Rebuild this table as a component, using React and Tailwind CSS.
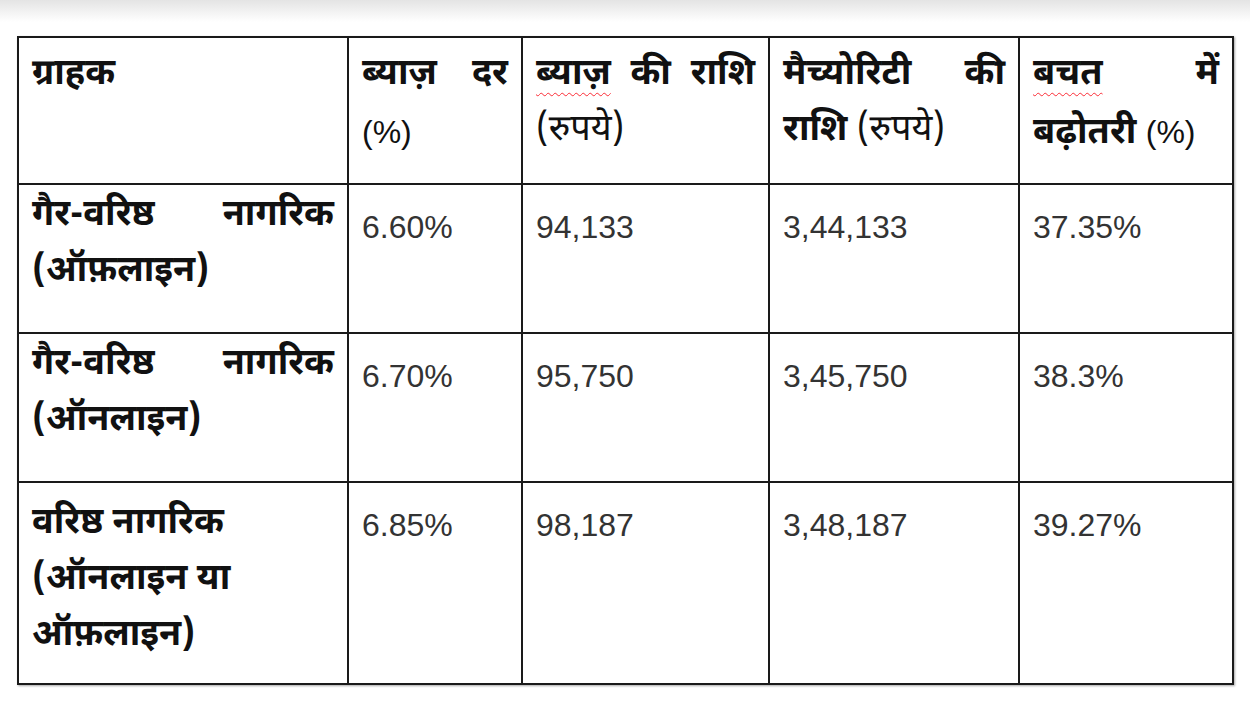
import React from "react";

const hindi = { fontFamily: '"Noto Sans Devanagari", "Lohit Devanagari", "Noto Sans", sans-serif' };
const latin = { fontFamily: '"Liberation Sans", Arial, sans-serif' };

const rows = [
  {
    name: [["गैर-वरिष्ठ", "नागरिक"], ["(ऑफ़लाइन)"]],
    rate: "6.60%",
    interest: "94,133",
    maturity: "3,44,133",
    growth: "37.35%",
    h: "h-[149px]",
    pad: "pt-[4px]",
  },
  {
    name: [["गैर-वरिष्ठ", "नागरिक"], ["(ऑनलाइन)"]],
    rate: "6.70%",
    interest: "95,750",
    maturity: "3,45,750",
    growth: "38.3%",
    h: "h-[149px]",
    pad: "pt-[4px]",
  },
  {
    name: [["वरिष्ठ नागरिक"], ["(ऑनलाइन या"], ["ऑफ़लाइन)"]],
    rate: "6.85%",
    interest: "98,187",
    maturity: "3,48,187",
    growth: "39.27%",
    h: "h-[202px]",
    pad: "pt-[14px]",
  },
];

const Line = ({ words }) => (
  <div className="flex justify-between leading-[56px]">
    {words.map((w, i) => (
      <span key={i}>{w}</span>
    ))}
  </div>
);

const Squiggle = ({ children }) => (
  <span className="underline decoration-wavy decoration-red-500 decoration-1 underline-offset-[8px]">
    {children}
  </span>
);

const Num = ({ children }) => (
  <td className="align-top border-2 border-[#1a1a1a] pl-[13px] pt-[24px]">
    <div className="text-[32px] font-normal text-[#333] leading-[36px]" style={latin}>
      {children}
    </div>
  </td>
);

export default function App() {
  const border = "align-top border-2 border-[#1a1a1a] px-[13px]";
  const head = `${border} pt-[10px]`;

  return (
    <div className="w-[1250px] h-[720px] bg-white overflow-hidden">
      <div className="h-[22px] bg-gradient-to-b from-[#e4e4e4] to-white" />
      <div className="pl-[17px] pt-[14px]">
        <table
          className="border-collapse table-fixed w-[1215px] text-[36px] font-bold text-[#111] shadow-[1px_1px_2px_rgba(0,0,0,0.35)]"
          style={hindi}
        >
          <colgroup>
            <col className="w-[330px]" />
            <col className="w-[174px]" />
            <col className="w-[247px]" />
            <col className="w-[250px]" />
            <col className="w-[214px]" />
          </colgroup>
          <tbody>
            <tr className="h-[147px]">
              <td className={head}>
                <Line words={["ग्राहक"]} />
              </td>
              <td className={head}>
                <Line words={["ब्याज़", "दर"]} />
                <div className="leading-[56px] font-normal text-[32px]" style={latin}>
                  (%)
                </div>
              </td>
              <td className={head}>
                <div className="flex justify-between leading-[56px]">
                  <Squiggle>ब्याज़</Squiggle>
                  <span>की</span>
                  <span>राशि</span>
                </div>
                <div className="leading-[56px] font-normal">(रुपये)</div>
              </td>
              <td className={head}>
                <Line words={["मैच्योरिटी", "की"]} />
                <div className="leading-[56px]">
                  राशि <span className="font-normal">(रुपये)</span>
                </div>
              </td>
              <td className={head}>
                <div className="flex justify-between leading-[56px]">
                  <Squiggle>बचत</Squiggle>
                  <span>में</span>
                </div>
                <div className="leading-[56px]">
                  बढ़ोतरी{" "}
                  <span className="font-normal text-[32px]" style={latin}>
                    (%)
                  </span>
                </div>
              </td>
            </tr>
            {rows.map((r, i) => (
              <tr key={i} className={r.h}>
                <td className={`${border} ${r.pad}`}>
                  {r.name.map((words, j) => (
                    <Line key={j} words={words} />
                  ))}
                </td>
                <Num>{r.rate}</Num>
                <Num>{r.interest}</Num>
                <Num>{r.maturity}</Num>
                <Num>{r.growth}</Num>
              </tr>
            ))}
          </tbody>
        </table>
      </div>
    </div>
  );
}
